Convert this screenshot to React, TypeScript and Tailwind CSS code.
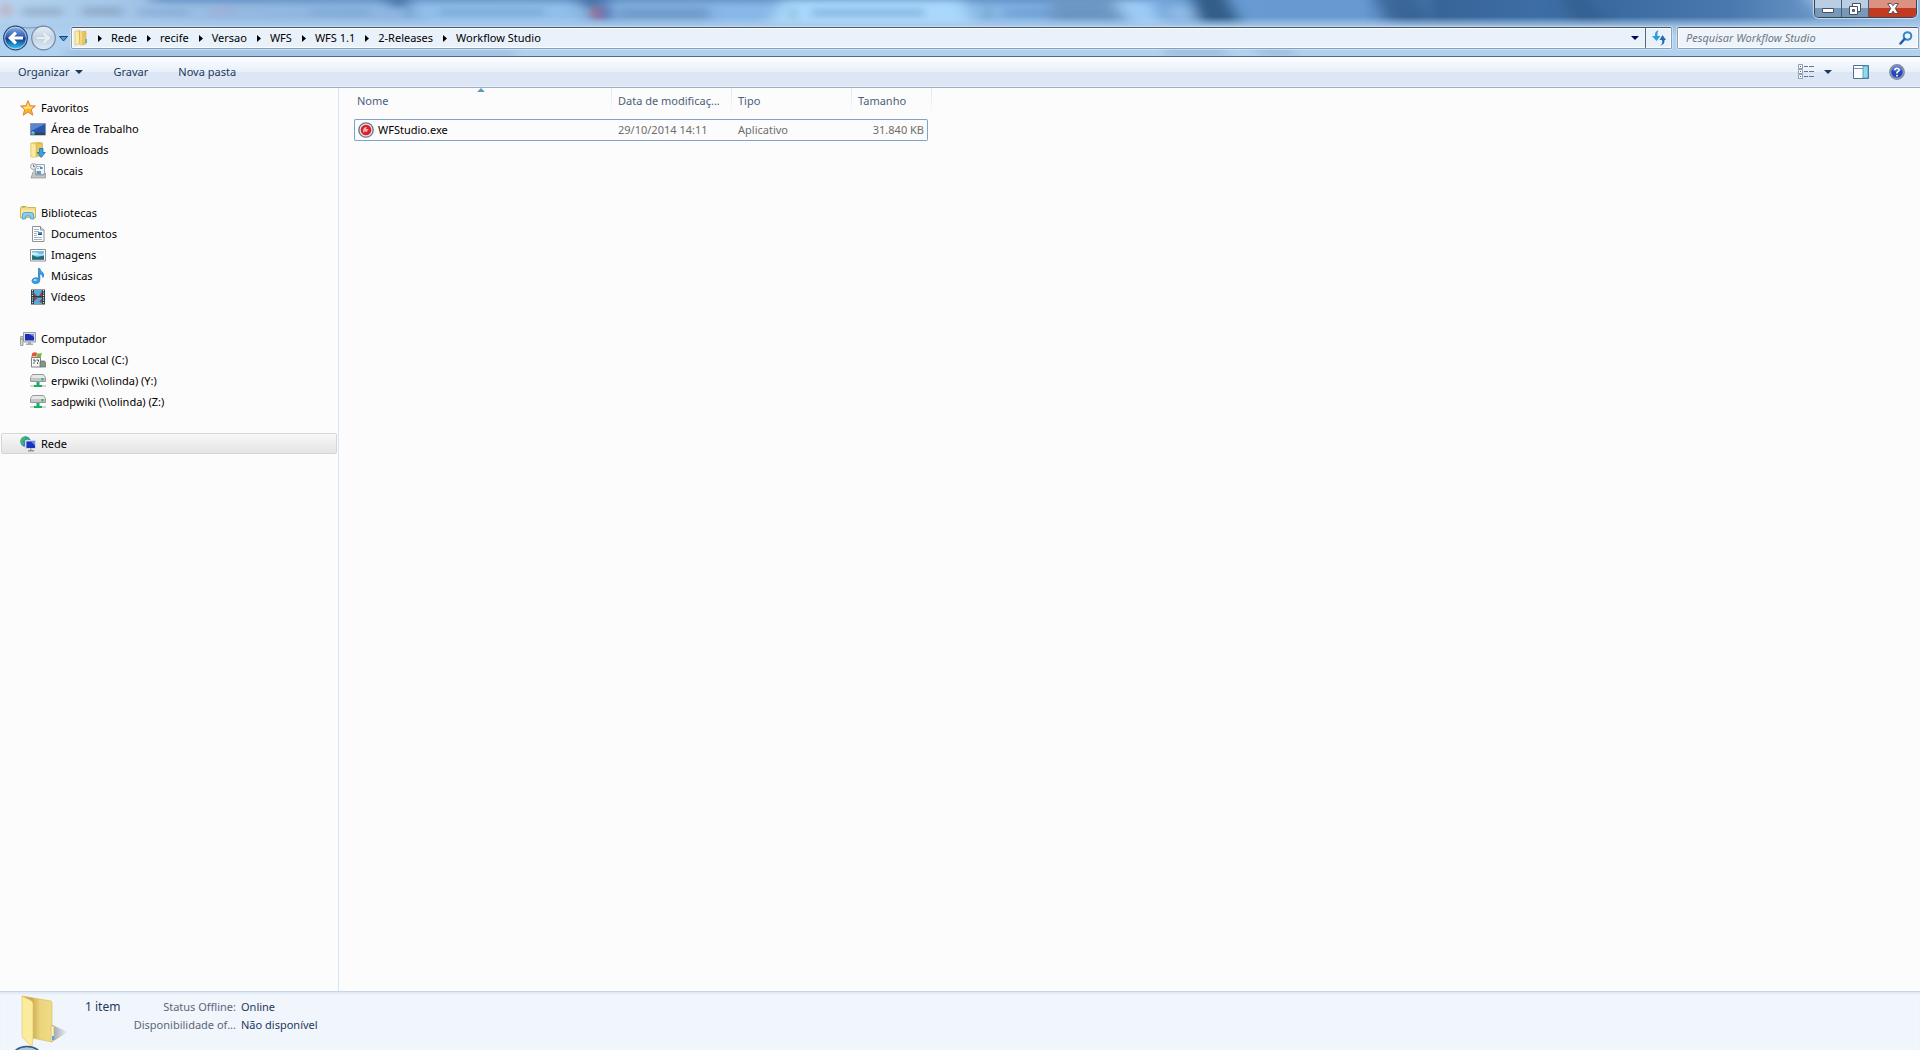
import { ReactNode } from "react";

const crumbs = ["Rede", "recife", "Versao", "WFS", "WFS 1.1", "2-Releases", "Workflow Studio"];

function Svg({ children, className = "w-4 h-4" }: { children: ReactNode; className?: string }) {
  return <svg viewBox="0 0 16 16" className={"shrink-0 " + className} aria-hidden="true">{children}</svg>;
}

function DownArrow() {
  return <svg viewBox="0 0 8 4" className="w-2 h-1 shrink-0" aria-hidden="true"><path d="M0 0h8L4 4z" fill="currentColor" /></svg>;
}

const icons: Record<string, ReactNode> = {
  star: (
    <Svg>
      <path d="M8 .7l2 5 5.4.3-4.1 3.5 1.5 5.7L8 12l-4.8 3.2 1.5-5.7L.6 6 6 5.7z" fill="#fcb32b" stroke="#e08039" strokeWidth="1" />
      <path d="M8 2.8l1.4 3.7 3.7.3-2.9 2.3-2.2-.5-3 .8-2-2.5 3.6-.4z" fill="#ffe36e" />
    </Svg>
  ),
  desktop: (
    <Svg>
      <path d="M.5 2.500h15v11.500H.5z" fill="#2858ae" stroke="#8796ab" />
      <path d="M1 3h14L1 10z" fill="#5a86d2" />
      <path d="M1 11.500h14V14H1z" fill="#33425c" />
      <circle cx="3" cy="12" r="2" fill="#39a3e8" /><path d="M2 11h1v1H2z" fill="#f4d34a" /><path d="M3 12h1v1H3z" fill="#7fd35c" />
    </Svg>
  ),
  downloads: (
    <Svg>
      <path d="M1 1l10-.5v13.500l-10 1z" fill="#f0d478" stroke="#d8b64f" strokeWidth=".8" />
      <path d="M6.500 1h6v13h-6z" fill="#e8c65e" stroke="#cfac48" strokeWidth=".6" />
      <path d="M1 1l5 1.500V15.500l-5-1z" fill="#fbe9a0" stroke="#dfc062" strokeWidth=".5" />
      <path d="M9.500 6.500h3.500v4h2.300L11.200 15.500 7.200 10.500h2.300z" fill="#38a3e3" stroke="#1a6fae" strokeWidth=".8" />
    </Svg>
  ),
  places: (
    <Svg>
      <path d="M5.500 1.500h9v10h-9z" fill="#eef3f7" stroke="#9aa5ad" />
      <path d="M7 3h4v1H7zM7 5h2v1H7z" fill="#a9b6c0" /><path d="M10 4h2.500v2H10z" fill="#3a8fd6" />
      <path d="M3 9h2v3h9v-2h1.500v5H1z" fill="#c3c6c8" stroke="#8d9194" strokeWidth=".7" />
      <path d="M4 6v7" stroke="#c4c8cb" strokeWidth="2" />
      <path d="M6.500 8h4.500v3H6.500z" fill="#5c9cc9" />
      <circle cx="3.500" cy="3.500" r="2.900" fill="#f0f2f3" stroke="#9a9fa3" strokeWidth="1" />
      <path d="M3.500 1.700v2H5" stroke="#555" fill="none" strokeWidth=".8" />
    </Svg>
  ),
  libraries: (
    <Svg>
      <path d="M.5 2.500l1-1h5l1 1h8v10H.5z" fill="#f3dc8b" stroke="#d3b25a" />
      <path d="M2 1.500h3v1H2z" fill="#6cb85b" /><path d="M1 5h14v7H1z" fill="#f9e8a4" />
      <path d="M2 14l.8-5q.2-1.500 1.500-1.500h7.500q1.300 0 1.500 1.500l.8 5h-3.400l-.5-3H5.800l-.4 3z" fill="#8fcbeb" stroke="#4b9fce" strokeWidth=".9" />
    </Svg>
  ),
  docs: (
    <Svg>
      <path d="M2.500.5h8l3.500 3.500v11.500H2.500z" fill="#fff" stroke="#8d9196" />
      <path d="M10.500.5v3.500H14" fill="#dde2e8" stroke="#8d9196" />
      <path d="M4 3.500h5M4 5.500h5M4 7.500h3M4 9.500h3M4 11.500h8M4 13.500h8" stroke="#a4b2c8" />
      <path d="M8 6h4v3H8z" fill="#4c94d8" /><path d="M8 8l4-.5V9H8z" fill="#1f4f7c" />
    </Svg>
  ),
  images: (
    <Svg>
      <path d="M.5 2.500h15v11.500H.5z" fill="#fff" stroke="#8b9096" />
      <path d="M2 4h12v8.500H2z" fill="#72bfe8" />
      <path d="M2 5.500q4-1 6 1t6 0v2H2z" fill="#c9eaf8" />
      <path d="M2 8l5 2 7-1.500v4H2z" fill="#22756a" /><path d="M2 11.500l12-1v2H2z" fill="#2f5d86" />
    </Svg>
  ),
  music: (
    <Svg>
      <path d="M8.500.5h1.300q.5 2.500 2.600 3.800 2.300 1.700.6 5.200-.2-3-3.200-3.800v6.500q0 3.300-4 3.300T2 12.700q.3-2.700 3.700-2.900 1.600-.1 2.800.8z" fill="#3aa0e2" stroke="#1c6fb4" strokeWidth=".7" />
      <ellipse cx="5" cy="12" rx="1.700" ry="1.100" fill="#b2e0fa" />
    </Svg>
  ),
  video: (
    <Svg>
      <path d="M1 .5h14v15H1z" fill="#2c3a44" />
      <path d="M4 1h8v6H4zM4 8.500h8V15H4z" fill="#58abe0" />
      <path d="M4 4l3 3H4zM12 2v5H9zM4 8.500h4l-4 4zM12 9v5l-3-1z" fill="#8b4a45" />
      <path d="M2.500 1v14M13.500 1v14" stroke="#dce4e8" strokeWidth="1.200" strokeDasharray="1.200 1.200" />
    </Svg>
  ),
  computer: (
    <Svg>
      <path d="M3.500 1.500h12v9.500h-12z" fill="#dcdedf" stroke="#9b9fa3" />
      <path d="M5 3h9v6.500H5z" fill="#1b2fb4" /><path d="M9 3h5v3z" fill="#6f8ce8" />
      <path d="M8 11h3v1.500h2V14H6v-1.500h2z" fill="#a8abad" />
      <path d="M.5 5.500h2.500v9H.5z" fill="#d4d7d9" stroke="#8c9194" strokeWidth=".8" /><path d="M1.200 7h1.200v2H1.200z" fill="#59bd4b" />
    </Svg>
  ),
  disk: (
    <Svg>
      <path d="M2 1.500Q5-.5 7 1l-.8 4Q4 3.500 1.500 5z" fill="#e8542d" /><path d="M7.500 1q2 1.200 4.500-.3l-1.200 4.500Q8.500 6.500 6.700 5z" fill="#74b843" />
      <path d="M1.500 5.500h9v9.500h-9z" fill="#f7f7f5" stroke="#77858c" />
      <path d="M3 8h2v1.500l-1 1V12M6.500 8h2v1.500l-1 1V12" fill="none" stroke="#4c5050" strokeWidth="1" />
      <path d="M10 10.500l1-1.500h3.500l1.200 1.500v4.500H10z" fill="#89918f" stroke="#626967" strokeWidth=".7" /><path d="M12.500 11.500h2v2h-2z" fill="#58ba45" />
    </Svg>
  ),
  netdrive: (
    <Svg>
      <path d="M2.500 1.500h11l2 3v4h-15v-4z" fill="#e6e7e8" stroke="#8b8f92" strokeWidth=".9" />
      <path d="M1 5h14v3H1z" fill="#c3c6c9" /><path d="M11.500 5h2v2.500h-2z" fill="#3cae45" />
      <path d="M6.500 9h3v3H12v2H4v-2h2.500z" fill="#19ad66" /><path d="M0 12.500h4v1H0zM12 12.500h4v1h-4z" fill="#9ab4aa" />
    </Svg>
  ),
  network: (
    <Svg>
      <circle cx="5.500" cy="5.500" r="5.200" fill="#2b86d8" /><path d="M1 3.500Q3 0 6 .6L5 4 3 5l1 3-1.500 1.500Q0 7 1 3.500zM7 1.500l2 1-1 2-2-1z" fill="#47bb4a" />
      <path d="M5.500 4.500h10v8h-10z" fill="#b7c3d3" stroke="#d5dae0" />
      <path d="M6.500 5.500h8.500V12H6.500z" fill="#1c34bd" /><path d="M11 5.500h4v4z" fill="#7590ea" />
      <path d="M10 12.500h1.500V14H14v1.500H8V14h2z" fill="#8d98a5" />
    </Svg>
  ),
};

const groups = [
  { name: "Favoritos", icon: "star", items: [["Área de Trabalho", "desktop"], ["Downloads", "downloads"], ["Locais", "places"]] },
  { name: "Bibliotecas", icon: "libraries", items: [["Documentos", "docs"], ["Imagens", "images"], ["Músicas", "music"], ["Vídeos", "video"]] },
  { name: "Computador", icon: "computer", items: [["Disco Local (C:)", "disk"], ["erpwiki (\\\\olinda) (Y:)", "netdrive"], ["sadpwiki (\\\\olinda) (Z:)", "netdrive"]] },
  { name: "Rede", icon: "network", items: [], selected: true },
];

function Glass() {
  return (
    <svg className="absolute inset-0 w-full h-full" viewBox="0 0 1920 57" preserveAspectRatio="none" aria-hidden="true">
      <defs>
        <linearGradient id="base">
          <stop offset="0" stopColor="#b5d3ef" /><stop offset=".12" stopColor="#94b9e1" /><stop offset=".3" stopColor="#86b2e0" />
          <stop offset=".5" stopColor="#8ab9e8" /><stop offset=".64" stopColor="#689bd2" /><stop offset=".71" stopColor="#6899d0" />
          <stop offset=".75" stopColor="#386599" /><stop offset=".8" stopColor="#3d6da5" /><stop offset=".84" stopColor="#3b6aa0" /><stop offset=".9" stopColor="#4878ae" /><stop offset="1" stopColor="#8db6e2" />
        </linearGradient>
        <linearGradient id="low" x2="0" y2="1">
          <stop offset=".3" stopColor="#b2d3f1" stopOpacity="0" /><stop offset=".46" stopColor="#aacbea" stopOpacity=".85" /><stop offset=".65" stopColor="#b0d1f0" />
        </linearGradient>
        <filter id="soft" x="-20%" y="-50%" width="140%" height="200%"><feGaussianBlur stdDeviation="8 3" /></filter>
        <filter id="smudge" x="-20%" y="-80%" width="140%" height="260%"><feGaussianBlur stdDeviation="5 3" /></filter>
      </defs>
      <path d="M0 0h1920v57H0z" fill="url(#base)" />
      <g filter="url(#soft)">
        <path d="M150-6h1000V3H150z" fill="#5584ba" opacity=".7" />
        <path d="M380-8h26l5 16h-18zM572-8h38l-6 18h-18z" fill="#3f6da3" opacity=".8" />
        <path d="M410 3h160l14 24H430z" fill="#91bfeb" />
        <path d="M590 8h120v18H590z" fill="#79a4d3" />
        <path d="M710 4h60v22h-60z" fill="#88b8e8" />
        <path d="M782 1h180l12 27H768z" fill="#a9d8fc" />
        <path d="M1050 0h70l12 24h-80z" fill="#7098c4" />
        <path d="M1114 1h38l12 27h-32z" fill="#9ccbf5" />
        <path d="M1168 5h20l8 17h-26z" fill="#91bde8" />
        <path d="M1190-8h34l18 36h-42z" fill="#315d88" />
        <path d="M1372-8h40l20 36h-40z" fill="#315d8d" opacity=".75" />
        <path d="M1560-8h26l24 36h-35z" fill="#315d8d" opacity=".75" />
        <path d="M1800-8h30v30h-4z" fill="#9bc1e9" opacity=".8" />
      </g>
      <g filter="url(#smudge)" opacity=".42">
        <path d="M2 4h8v13H2z" fill="#d5776b" />
        <path d="M22 8h40v8H22zM82 7h40v9H82z" fill="#7388a0" />
        <path d="M138 9h50v7h-50zM310 9h60v7h-60z" fill="#6d99c8" />
        <path d="M210 8h24v8h-24z" fill="#a9a4cb" />
        <path d="M404 8h10v10h-10zM440 9h104v7H440z" fill="#5f90c2" />
        <path d="M591 6h11v15h-11z" fill="#ae2632" /><path d="M601 6h9v15h-9z" fill="#27439b" />
        <path d="M622 9h86v8h-86zM812 9h112v8H812zM1005 9h100v8h-100z" fill="#5f8fc1" />
        <path d="M790 7h6v14h-6zM985 7h6v14h-6z" fill="#679e9f" />
      </g>
      <path d="M0 0h1920v57H0z" fill="url(#low)" />
      <path d="M65 52h450v5H65z" fill="#86acd2" opacity=".6" filter="url(#smudge)" />
      <path d="M1165 48h55l12 9h-67zM1248 48h40l12 9h-35z" fill="#86aad0" opacity=".45" filter="url(#smudge)" />
    </svg>
  );
}

function TitleBar() {
  return (
    <div className="flex justify-end h-[27px] pr-[3px]">
      <div className="flex h-[18px] border border-t-0 border-[#35465a] rounded-b-[5px] overflow-hidden shadow-[0_0_1px_1px_rgba(255,255,255,0.6)]">
        <button aria-label="Minimizar" className="w-[27px] flex items-center justify-center border-r border-[#465b75] bg-linear-to-b from-[#b9cee3] from-50% to-[#7898b8] to-50%">
          <svg className="w-3 h-2 mt-1" viewBox="0 0 12 8"><path d="M.5 1.500h11v4H.5z" fill="#fff" stroke="#46505e" /></svg>
        </button>
        <button aria-label="Restaurar" className="w-[27px] flex items-center justify-center border-r border-[#465b75] bg-linear-to-b from-[#b9cee3] from-50% to-[#7898b8] to-50%">
          <svg className="w-3 h-3" viewBox="0 0 12 12" fill="#fff" stroke="#46505e"><path d="M3.500.5h8v8h-8z" /><path d="M.5 3.500h8v8h-8z" /><path d="M3.500 6.500h2v2h-2z" fill="#7898b8" /></svg>
        </button>
        <button aria-label="Fechar" className="w-[47px] flex items-center justify-center bg-linear-to-b from-[#dc9282] from-50% to-[#c23a20] to-50%">
          <svg className="w-3 h-[11px]" viewBox="0 0 12 11"><path d="M.7.5h3.500L6 2.700 7.800.5h3.500L8.300 5.500l3 5H7.800L6 8.300l-1.800 2.200H.7l3-5z" fill="#fff" stroke="#4a4550" strokeWidth=".9" /></svg>
        </button>
      </div>
    </div>
  );
}

function NavBar() {
  return (
    <div className="flex items-start pr-px">
      <svg className="w-[71px] h-[26px] -mt-[2px] shrink-0" viewBox="0 0 71 26" role="img" aria-label="Voltar e avançar">
        <defs>
          <linearGradient id="back" x2="0" y2="1"><stop stopColor="#93b5e7" /><stop offset=".48" stopColor="#2656b0" /><stop offset=".5" stopColor="#0b3289" /><stop offset="1" stopColor="#3bd2fb" /></linearGradient>
          <linearGradient id="fwd" x2="0" y2="1"><stop stopColor="#e6eef6" /><stop offset=".5" stopColor="#c3d3e2" /><stop offset="1" stopColor="#dceaf6" /></linearGradient>
        </defs>
        <path d="M15 1q14 4 28 0" fill="none" stroke="#7f98b3" />
        <circle cx="15.500" cy="13" r="11.800" fill="url(#back)" stroke="#30476a" strokeWidth="1.200" />
        <circle cx="15.500" cy="13" r="10.800" fill="none" stroke="#d3e6fa" strokeWidth=".7" />
        <path d="M14.800 6.500L8 13l6.800 6.500 2.200-2.200-2.800-2.800H23v-3h-8.800L17 8.700z" fill="#fff" />
        <circle cx="43.500" cy="13" r="11.800" fill="url(#fwd)" stroke="#7489a0" strokeWidth="1.200" />
        <path d="M44.200 6.500L51 13l-6.800 6.500-2.200-2.200 2.800-2.800H36v-3h8.800L42 8.700z" fill="#e5edf5" stroke="#b8c7d6" strokeWidth=".6" />
        <path d="M59.500 11.500h8L63.500 16z" fill="#38a4dc" stroke="#173f70" />
      </svg>
      <div className="flex flex-1 min-w-0 h-[22px] bg-[#e9f1fa] border border-[#8d9fb2] border-t-[#4a5666] rounded-[2px] shadow-[inset_0_0_0_1px_#fbfdff,0_0_0_1px_rgba(255,255,255,0.35)]">
        <svg className="w-4 h-4 mt-[2px] ml-px shrink-0" viewBox="0 0 16 16" aria-hidden="true">
          <path d="M2 1.500l5-1v13l-5 1.500z" fill="#fbecaa" stroke="#dbbb57" strokeWidth=".6" /><path d="M6 1.500h7v12.500l-6 1z" fill="#e7c662" stroke="#cba946" strokeWidth=".6" />
          <path d="M8 1v14" stroke="#fff0a8" /><path d="M12.500 9h1.500v4h-1.500z" fill="#5ba7e4" />
        </svg>
        <nav aria-label="Endereço" className="flex items-center flex-1 ml-[9px]">
          {crumbs.map((c) => (
            <span key={c} className="flex items-center">
              <svg className="w-1 h-[7px]" viewBox="0 0 4 7" aria-hidden="true"><path d="M0 0l4 3.500L0 7z" fill="#000" /></svg>
              <button className="pl-[9px] pr-[10px] leading-5 text-black whitespace-nowrap">{c}</button>
            </span>
          ))}
        </nav>
        <button aria-label="Locais anteriores" className="w-[20px] flex items-center justify-center text-[#04045c]"><DownArrow /></button>
        <button aria-label="Atualizar" className="w-[26px] flex items-center justify-center border-l border-[#58687c]">
          <svg className="w-[14px] h-4" viewBox="0 0 14 16"><path d="M6.500.5Q2.500 1 3 6H0l4.500 5L8.500 6h-3Q5 2.500 6.500.5z" fill="#2e9bdd" /><path d="M8 15.500Q11 14 10 10H7.500L10.500 5l3.500 5h-1.500Q13 14.500 8 15.500z" fill="#2868b3" /></svg>
        </button>
      </div>
      <label className="flex items-center w-[242px] h-[22px] ml-[5px] pl-[8px] pr-[5px] bg-[#edf4fb] border border-[#8d9fb2] border-t-[#4a5666] rounded-[2px] shadow-[inset_0_0_0_1px_#fbfdff,0_0_0_1px_rgba(255,255,255,0.35)]">
        <input type="search" aria-label="Pesquisar" placeholder="Pesquisar Workflow Studio" className="flex-1 min-w-0 bg-transparent outline-none italic placeholder:text-[#6f7882]" />
        <svg className="w-[14px] h-[14px]" viewBox="0 0 14 14" fill="none" aria-hidden="true"><circle cx="8.500" cy="5" r="3.800" stroke="#3187cf" strokeWidth="2" /><path d="M5.500 8L1.500 12.500" stroke="#2459a5" strokeWidth="2.500" strokeLinecap="round" /></svg>
      </label>
    </div>
  );
}

function Toolbar() {
  return (
    <div className="flex items-center h-[31px] pl-[18px] pr-[15px] text-[#1e395b] border-b border-[#a0afc6] bg-linear-to-b from-[#fbfdff] via-[#e8f0fa] via-50% to-[#dce6f4] to-50% shadow-[inset_0_-1px_0_#e6effa]">
      <button className="flex items-center gap-[6px]">Organizar <DownArrow /></button>
      <button className="ml-[30px]">Gravar</button>
      <button className="ml-[30px]">Nova pasta</button>
      <button aria-label="Alterar modo de exibição" className="ml-auto flex items-center gap-[10px]">
        <svg className="w-4 h-4" viewBox="0 0 16 16">
          <path d="M.5.500h4v4h-4zM.5 5.500h4v4h-4zM.5 10.500h4v4h-4z" fill="#fff" stroke="#8d9db3" />
          <path d="M2 2h1v1H2zM2 12h1v1H2z" fill="#3667a6" /><path d="M2 7h1v1H2z" fill="#d03a2a" />
          <path d="M6 2.500h4M11 2.500h5M6 7.500h4M11 7.500h5M6 12.500h4M11 12.500h5" stroke="#63758d" />
        </svg>
        <DownArrow />
      </button>
      <button aria-label="Painel de visualização" className="ml-[21px]">
        <svg className="w-4 h-[14px]" viewBox="0 0 16 14"><path d="M.5.500h15v13H.5z" fill="#fff" stroke="#536f94" /><path d="M1 3.500h9" stroke="#7891ae" /><path d="M10 1h5v12h-5z" fill="#8bdcf0" stroke="#4c91ad" strokeWidth=".8" /></svg>
      </button>
      <button aria-label="Ajuda" className="ml-[20px]">
        <svg className="w-4 h-4" viewBox="0 0 16 16"><circle cx="8" cy="8" r="7.200" fill="#2346b8" stroke="#84898f" strokeWidth="1.400" /><circle cx="8" cy="8" r="6.200" fill="none" stroke="#d6dce6" strokeWidth=".6" /><path d="M3 6a5 5 0 0 1 10 0q-5 3-10 0z" fill="#6a8bdf" opacity=".7" /><path d="M5.800 6.200Q6 4.200 8 4.200t2.200 1.800Q10.200 7.200 8 8.400v1.200M8 10.800v1.600" fill="none" stroke="#fff" strokeWidth="1.600" /></svg>
      </button>
    </div>
  );
}

function Sidebar() {
  return (
    <aside className="w-[339px] shrink-0 pt-[9px] border-r border-[#d6e5f5]">
      {groups.map((g) => (
        <section key={g.name} className="mb-[21px]">
          <button className={"flex items-center gap-[5px] w-[336px] h-[21px] ml-px pl-[18px] border rounded-[2px] " + (g.selected ? "border-[#d5d5d5] bg-linear-to-b from-[#f8f8f8] to-[#e4e4e4]" : "border-transparent")}>
            {icons[g.icon]}{g.name}
          </button>
          {g.items.map(([name, icon]) => (
            <button key={name} className="flex items-center gap-[5px] w-full h-[21px] pl-[30px]">{icons[icon]}{name}</button>
          ))}
        </section>
      ))}
    </aside>
  );
}

function FileList() {
  const th = "relative h-[26px] font-normal text-left px-[6px] border-r [border-image:linear-gradient(#d8e7f8,#fcfcfc)_1]";
  const td = "h-[22px] border-y border-[#7da2ce] px-[6px] whitespace-nowrap";
  return (
    <main className="flex-1 min-w-0 pl-[15px]">
      <table className="table-fixed w-[578px] border-separate border-spacing-0">
        <colgroup><col className="w-[258px]" /><col className="w-[120px]" /><col className="w-[120px]" /><col className="w-[76px]" /><col className="w-[4px]" /></colgroup>
        <thead className="text-[#4c607a]">
          <tr>
            <th className={th + " pl-[3px]"}>
              Nome
              <svg className="absolute top-0 left-[123px] w-2 h-1" viewBox="0 0 8 4" aria-hidden="true"><path d="M0 4l4-4 4 4z" fill="#5c9cb9" /></svg>
            </th>
            <th className={th + " whitespace-nowrap"}>Data de modificaç...</th>
            <th className={th}>Tipo</th>
            <th className="px-[6px] font-normal text-left">Tamanho</th>
            <td className="border-r [border-image:linear-gradient(#d8e7f8,#fcfcfc)_1]"></td>
          </tr>
        </thead>
        <tbody className="text-[#6d6d6d]">
          <tr><td colSpan={5} className="h-[5px]"></td></tr>
          <tr>
            <td className={td + " border-l rounded-l-[2px] pl-[3px]"}>
              <div className="flex items-center gap-1 text-black">
                <Svg><circle cx="8" cy="8" r="7.200" fill="#dfe3eb" stroke="#64728c" strokeWidth="1.300" /><circle cx="8" cy="8" r="5.300" fill="#df1f26" /><path d="M5 9q0-4 4-4l-1 2h3l-2 1.500h1l-2 2-1-1.500-1.500 2z" fill="#f9b0ac" /></Svg>
                WFStudio.exe
              </div>
            </td>
            <td className={td}>29/10/2014 14:11</td>
            <td className={td}>Aplicativo</td>
            <td className={td + " border-r rounded-r-[2px] pr-[3px] text-right"}>31.840 KB</td>
            <td></td>
          </tr>
        </tbody>
      </table>
    </main>
  );
}

function DetailsPane() {
  return (
    <footer className="flex h-[59px] border-t border-[#c6d5e8] bg-[#f1f5fc] text-[#1e395b] shadow-[inset_0_2px_1px_#e2eaf5]">
      <svg className="w-[85px] h-[58px] shrink-0" viewBox="0 0 85 58" aria-hidden="true">
        <defs>
          <linearGradient id="fold"><stop stopColor="#c9a84f" /><stop offset=".3" stopColor="#c9a84f" /><stop offset=".6" stopColor="#ead47b" /><stop offset="1" stopColor="#f0dc86" /></linearGradient>
          <linearGradient id="shade"><stop stopColor="#777e89" stopOpacity=".8" /><stop offset="1" stopColor="#777e89" stopOpacity="0" /></linearGradient>
        </defs>
        <path d="M50 32l18 8-16 10z" fill="url(#shade)" />
        <path d="M22 4l29 5q1 0 1 2v39l-20-4z" fill="url(#fold)" stroke="#d6ba5b" strokeWidth=".6" />
        <path d="M22 4l8 4q3 1 3 4v33l-1 10-9-9q-1-1-1-3z" fill="#fbeb9c" stroke="#e0c566" strokeWidth=".6" />
        <path d="M51 34h3v14l-3 2z" fill="#f8efbf" stroke="#cfb45a" strokeWidth=".6" /><path d="M52 44h2v4h-2z" fill="#5f9fe2" />
        <ellipse cx="27" cy="69" rx="17" ry="14.500" fill="#adc8dc" stroke="#315b82" strokeWidth="1.300" />
      </svg>
      <div className="pt-[6px] w-[46px] shrink-0 text-[12px] leading-[18px]">1 item</div>
      <dl className="grid grid-cols-[105px_auto] gap-x-[5px] content-start pt-[6px] leading-[18px]">
        <dt className="flex justify-end text-[#5a6779] whitespace-nowrap">Status Offline:</dt><dd>Online</dd>
        <dt className="flex justify-end text-[#5a6779] whitespace-nowrap">Disponibilidade of...</dt><dd>Não disponível</dd>
      </dl>
    </footer>
  );
}

export default function App() {
  return (
    <div className="flex flex-col h-screen overflow-hidden bg-[#fcfcfc] text-black text-[11px] leading-4 font-['Noto_Sans','Open_Sans',sans-serif]">
      <header className="relative shrink-0 h-[57px] border-b border-[#55677e]">
        <Glass />
        <div className="relative">
          <TitleBar />
          <NavBar />
        </div>
      </header>
      <Toolbar />
      <div className="flex flex-1 min-h-0">
        <Sidebar />
        <FileList />
      </div>
      <DetailsPane />
    </div>
  );
}
